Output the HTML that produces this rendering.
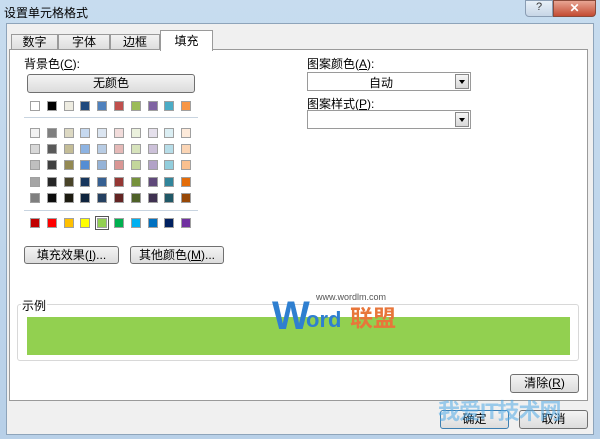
<!DOCTYPE html>
<html><head><meta charset="utf-8"><style>
*{margin:0;padding:0;box-sizing:border-box}
body{width:600px;height:439px;overflow:hidden;background:linear-gradient(#c7dcef,#b8d0e8);font-family:"Liberation Sans","Noto Sans CJK SC",sans-serif;font-size:12px;color:#000;position:relative}
.a{position:absolute}
.btn{position:absolute;border:1px solid #707070;border-radius:3px;background:linear-gradient(#f4f4f4,#dcdcdc);text-align:center;font-size:12px;line-height:17px}
.sw{position:absolute;width:10px;height:10px;border:1px solid #a0a0a0}
.combo{position:absolute;border:1px solid #9a9a9a;background:#fff;height:19px}
.dd{position:absolute;right:1px;top:1px;width:14px;height:15px;border:1px solid #888;background:linear-gradient(#f6f6f6,#d8d8d8)}
.dd:after{content:"";position:absolute;left:3px;top:5px;border-left:3px solid transparent;border-right:3px solid transparent;border-top:4px solid #000}
</style></head><body>
<div class="a" style="left:4px;top:4px;font-size:12px">设置单元格格式</div>
<div class="a" style="left:525px;top:0;width:28px;height:17px;border:1px solid #8a9db3;border-radius:0 0 0 4px;background:linear-gradient(#e8f0f8,#c7d6e6);text-align:center;font-size:11px;color:#333">?</div>
<div class="a" style="left:553px;top:0;width:43px;height:17px;border:1px solid #8a4a3a;border-radius:0 0 4px 0;background:linear-gradient(#e8a593,#c34b32);text-align:center;color:#fff;font-weight:bold;font-size:12px">✕</div>
<div class="a" style="left:6px;top:23px;width:588px;height:412px;background:#f0f0f0;border:1px solid #8ea4ba"></div>
<!-- tabs -->
<div class="a" style="left:11px;top:34px;width:47px;height:16px;border:1px solid #9a9a9a;background:linear-gradient(#f2f2f2,#dedede);text-align:center;font-size:12px;line-height:15px">数字</div>
<div class="a" style="left:58px;top:34px;width:52px;height:16px;border:1px solid #9a9a9a;background:linear-gradient(#f2f2f2,#dedede);text-align:center;line-height:15px">字体</div>
<div class="a" style="left:110px;top:34px;width:50px;height:16px;border:1px solid #9a9a9a;background:linear-gradient(#f2f2f2,#dedede);text-align:center;line-height:15px">边框</div>
<div class="a" style="left:9px;top:49px;width:579px;height:352px;background:#fff;border:1px solid #9a9a9a"></div>
<div class="a" style="left:160px;top:30px;width:53px;height:21px;border:1px solid #9a9a9a;border-bottom:none;background:#fff;text-align:center;line-height:20px">填充</div>
<div class="a" style="left:24px;top:55px">背景色(<u>C</u>):</div>
<div class="btn" style="left:27px;top:74px;width:168px;height:19px">无颜色</div>
<div class="a" style="left:24px;top:117px;width:174px;height:1px;background:#c8d4e0"></div>
<div class="a" style="left:24px;top:210px;width:174px;height:1px;background:#c8d4e0"></div>
<div id="pal"></div>
<div class="btn" style="left:24px;top:246px;width:95px;height:18px">填充效果(<u>I</u>)...</div>
<div class="btn" style="left:130px;top:246px;width:94px;height:18px">其他颜色(<u>M</u>)...</div>
<div class="a" style="left:307px;top:55px">图案颜色(<u>A</u>):</div>
<div class="combo" style="left:307px;top:72px;width:164px"><div class="a" style="left:0;width:146px;text-align:center;top:1px">自动</div><div class="dd"></div></div>
<div class="a" style="left:307px;top:95px">图案样式(<u>P</u>):</div>
<div class="combo" style="left:307px;top:110px;width:164px"><div class="dd"></div></div>
<div class="a" style="left:17px;top:304px;width:562px;height:57px;border:1px solid #d8d8d8;border-radius:3px"></div>
<div class="a" style="left:21px;top:297px;background:#fff;padding:0 1px">示例</div>
<div class="a" style="left:27px;top:317px;width:543px;height:38px;background:#92d050"></div>
<div class="a" style="left:272px;top:296px;font-size:40px;font-weight:bold;color:#2f7fd0;letter-spacing:-2px;line-height:40px">W</div>
<div class="a" style="left:306px;top:308px;font-size:22px;font-weight:bold;color:#2f7fd0;line-height:24px">ord</div>
<div class="a" style="left:350px;top:305px;font-size:23px;font-weight:bold;color:#e8763a;line-height:26px">联盟</div>
<div class="a" style="left:316px;top:292px;font-size:9px;color:#555">www.wordlm.com</div>
<div class="btn" style="left:510px;top:374px;width:69px;height:19px">清除(<u>R</u>)</div>
<div class="btn" style="left:440px;top:410px;width:69px;height:19px;border-color:#3c7fb1">确定</div>
<div class="btn" style="left:519px;top:410px;width:69px;height:19px">取消</div>
<div class="a" style="left:438px;top:394px;font-size:22px;font-weight:bold;color:rgba(80,170,230,.55);letter-spacing:-1px">我爱IT技术网</div>
<script>
var rows=[["#ffffff","#000000","#eeece1","#1f497d","#4f81bd","#c0504d","#9bbb59","#8064a2","#4bacc6","#f79646"],
["#f2f2f2","#7f7f7f","#ddd9c3","#c6d9f0","#dbe5f1","#f2dcdb","#ebf1dd","#e5e0ec","#dbeef3","#fdeada"],
["#d8d8d8","#595959","#c4bd97","#8db3e2","#b8cce4","#e5b9b7","#d7e3bc","#ccc1d9","#b7dde8","#fbd5b5"],
["#bfbfbf","#3f3f3f","#938953","#548dd4","#95b3d7","#d99694","#c3d69b","#b2a2c7","#92cddc","#fac08f"],
["#a5a5a5","#262626","#494429","#17365d","#366092","#953734","#76923c","#5f497a","#31859b","#e36c09"],
["#7f7f7f","#0c0c0c","#1d1b10","#0f243e","#244061","#632423","#4f6128","#3f3151","#205867","#974806"],
["#c00000","#ff0000","#ffc000","#ffff00","#92d050","#00b050","#00b0f0","#0070c0","#002060","#7030a0"]];
var ys=[101,128,144,160,177,193,218],h="";
rows.forEach(function(r,i){r.forEach(function(c,j){var x=30+j*16.8;
h+='<div class="sw" style="left:'+x+'px;top:'+ys[i]+'px;background:'+c+(i==6&&j==4?';outline:1px solid #555;outline-offset:1px':'')+'"></div>';});});
document.getElementById("pal").innerHTML=h;
</script>
</body></html>
